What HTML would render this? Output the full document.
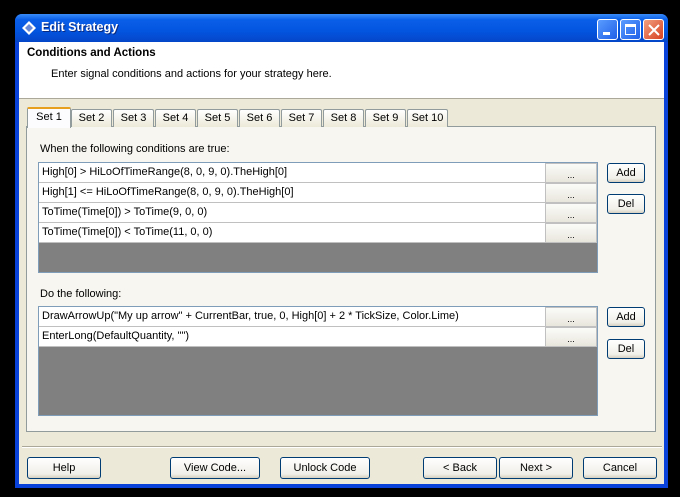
<!DOCTYPE html>
<html><head><meta charset="utf-8"><style>
*{box-sizing:border-box;margin:0;padding:0}
body{width:680px;height:497px;background:#000;position:relative;overflow:hidden;font-family:"Liberation Sans",sans-serif;font-size:11px;color:#000}
.abs{position:absolute}
.win{left:15px;top:14px;width:653px;height:474px;background:#0842d8;border-radius:7px 7px 0 0}
.title{left:15px;top:14px;width:653px;height:28px;border-radius:7px 7px 0 0;background:linear-gradient(#3a8cf8,#0a5fe8 20%,#0355e0 60%,#0446c8);}
.title span{position:absolute;left:26px;top:6px;color:#fff;font-weight:bold;font-size:12.5px;text-shadow:1px 1px #0a2a80}
.client{left:19px;top:42px;width:645px;height:442px;background:#ece9d8}
.hdr{left:19px;top:42px;width:645px;height:57px;background:#fff;border-bottom:1px solid #aca899}
.tb{top:19px;width:21px;height:21px;border:1px solid #fff;border-radius:3px;background:linear-gradient(135deg,#5a9cff,#2060e8)}
.tab{top:109px;height:18px;border:1px solid #919b9c;border-bottom:none;background:linear-gradient(#fff,#ece9d8);text-align:center;line-height:16px;border-radius:2px 2px 0 0}
.panel{left:26px;top:126px;width:630px;height:306px;border:1px solid #919b9c;background:#f7f6f0}
.grid{background:#808080;border:1px solid #7f9db9}
.row{position:absolute;left:0;height:20px;background:#fff;border-bottom:1px solid #c0c0c0;padding-left:3px;line-height:19px;white-space:nowrap}
.dots{position:absolute;height:20px;width:52px;background:linear-gradient(#fbfbf9,#e8e6dc);border:1px solid #c0c0c0;text-align:center;line-height:22px;font-size:9px}
.btn{position:absolute;border:1px solid #003c74;border-radius:3px;background:linear-gradient(#fff,#f0efe8 80%,#d6d0c0);text-align:center;font-size:11px}
</style></head><body>
<div class="abs win"></div>
<div class="abs title"><svg style="position:absolute;left:7px;top:7px" width="14" height="14"><path d="M7 0L14 7L7 14L0 7Z" fill="#fff"/><path d="M7 3L11 7L7 11L3 7Z" fill="#6a8ad8"/></svg><span>Edit Strategy</span></div>
<div class="abs tb" style="left:597px"><div class="abs" style="left:5px;top:12px;width:7px;height:3px;background:#fff"></div></div>
<div class="abs tb" style="left:620px"><div class="abs" style="left:4px;top:4px;width:11px;height:11px;border:1px solid #fff;border-top-width:3px"></div></div>
<div class="abs tb" style="left:643px;background:linear-gradient(135deg,#f0a080,#d84020)"><svg class="abs" style="left:4px;top:4px" width="12" height="12"><path d="M1 1L11 11M11 1L1 11" stroke="#fff" stroke-width="2"/></svg></div>
<div class="abs client"></div>
<div class="abs hdr"></div>
<div class="abs" style="left:27px;top:47px;font-weight:bold;font-size:11.5px">Conditions and Actions</div>
<div class="abs" style="left:51px;top:68px">Enter signal conditions and actions for your strategy here.</div>

<div class="abs panel"></div>
<div class="abs tab" style="left:27px;top:107px;height:21px;width:44px;background:#fcfcfe;border-top:2px solid #e8a020;line-height:17px;border-bottom:none">Set 1</div>
<div class="abs tab" style="left:71px;width:41px">Set 2</div>
<div class="abs tab" style="left:113px;width:41px">Set 3</div>
<div class="abs tab" style="left:155px;width:41px">Set 4</div>
<div class="abs tab" style="left:197px;width:41px">Set 5</div>
<div class="abs tab" style="left:239px;width:41px">Set 6</div>
<div class="abs tab" style="left:281px;width:41px">Set 7</div>
<div class="abs tab" style="left:323px;width:41px">Set 8</div>
<div class="abs tab" style="left:365px;width:41px">Set 9</div>
<div class="abs tab" style="left:407px;width:41px">Set 10</div>

<div class="abs" style="left:40px;top:143px">When the following conditions are true:</div>
<div class="abs grid" style="left:38px;top:162px;width:560px;height:111px">
<div class="row" style="top:0;width:507px">High[0] &gt; HiLoOfTimeRange(8, 0, 9, 0).TheHigh[0]</div><div class="dots" style="left:506px;top:0">...</div>
<div class="row" style="top:20px;width:507px">High[1] &lt;= HiLoOfTimeRange(8, 0, 9, 0).TheHigh[0]</div><div class="dots" style="left:506px;top:20px">...</div>
<div class="row" style="top:40px;width:507px">ToTime(Time[0]) &gt; ToTime(9, 0, 0)</div><div class="dots" style="left:506px;top:40px">...</div>
<div class="row" style="top:60px;width:507px">ToTime(Time[0]) &lt; ToTime(11, 0, 0)</div><div class="dots" style="left:506px;top:60px">...</div>
</div>
<div class="btn" style="left:607px;top:163px;width:38px;height:20px;line-height:18px">Add</div>
<div class="btn" style="left:607px;top:194px;width:38px;height:20px;line-height:18px">Del</div>

<div class="abs" style="left:40px;top:288px">Do the following:</div>
<div class="abs grid" style="left:38px;top:306px;width:560px;height:110px">
<div class="row" style="top:0;width:507px">DrawArrowUp("My up arrow" + CurrentBar, true, 0, High[0] + 2 * TickSize, Color.Lime)</div><div class="dots" style="left:506px;top:0">...</div>
<div class="row" style="top:20px;width:507px">EnterLong(DefaultQuantity, "")</div><div class="dots" style="left:506px;top:20px">...</div>
</div>
<div class="btn" style="left:607px;top:307px;width:38px;height:20px;line-height:18px">Add</div>
<div class="btn" style="left:607px;top:339px;width:38px;height:20px;line-height:18px">Del</div>

<div class="abs" style="left:22px;top:446px;width:640px;height:2px;border-top:1px solid #aca899;border-bottom:1px solid #fff"></div>
<div class="btn" style="left:27px;top:457px;width:74px;height:22px;line-height:20px">Help</div>
<div class="btn" style="left:170px;top:457px;width:90px;height:22px;line-height:20px">View Code...</div>
<div class="btn" style="left:280px;top:457px;width:90px;height:22px;line-height:20px">Unlock Code</div>
<div class="btn" style="left:423px;top:457px;width:74px;height:22px;line-height:20px">&lt; Back</div>
<div class="btn" style="left:499px;top:457px;width:74px;height:22px;line-height:20px">Next &gt;</div>
<div class="btn" style="left:583px;top:457px;width:74px;height:22px;line-height:20px">Cancel</div>
</body></html>
